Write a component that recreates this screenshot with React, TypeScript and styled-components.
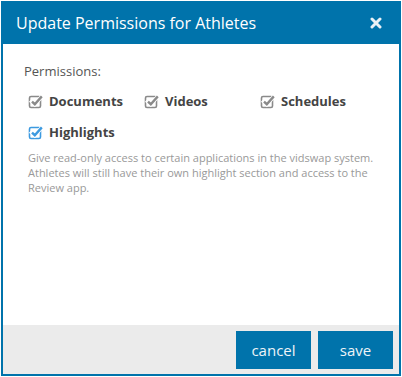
import React from 'react';
import styled, { createGlobalStyle } from 'styled-components';

const GlobalStyle = createGlobalStyle`
  html, body {
    margin: 0;
    padding: 0;
    background: #ffffff;
    font-family: "Open Sans", "Liberation Sans", sans-serif;
  }
`;

const blue = '#0073ab';

const Dialog = styled.div`
  box-sizing: border-box;
  margin: 1px 0 0 1px;
  width: 400px;
  height: 375px;
  border: 2px solid ${blue};
  border-top: none;
  display: flex;
  flex-direction: column;
  background: #fff;
`;

const Header = styled.div`
  background: ${blue};
  height: 43px;
  display: flex;
  align-items: center;
  justify-content: space-between;
  padding: 0 19px 0 15px;
  margin: 0 -2px;
`;

const Title = styled.h3`
  margin: 0;
  color: #fff;
  font-size: 16px;
  font-weight: 400;
`;

const Body = styled.div`
  flex: 1;
  padding: 18px 20px 0 21px;
`;

const Label = styled.div`
  color: #555;
  font-size: 13px;
  margin-bottom: 11px;
`;

const Grid = styled.div`
  display: grid;
  grid-template-columns: 116px 116px 116px;
  row-gap: 12px;
  padding-left: 4px;
`;

const Option = styled.label`
  display: flex;
  align-items: center;
  gap: 5px;
  color: #444;
  font-size: 13px;
  font-weight: 700;
  height: 19px;
`;

const Help = styled.p`
  margin: 9px 0 0 4px;
  color: #999;
  font-size: 11px;
  line-height: 15px;
`;

const Footer = styled.div`
  background: #ebebeb;
  height: 49px;
  display: flex;
  justify-content: flex-end;
  align-items: center;
  gap: 7px;
  padding-right: 6px;
`;

const Button = styled.button`
  width: 75px;
  height: 38px;
  border: none;
  background: ${blue};
  color: #eef4f8;
  font-family: "Open Sans", "Liberation Sans", sans-serif;
  font-size: 15px;
  padding: 0;
`;

const Check = ({ on }: { on?: boolean }) => {
  const c = on ? '#3c9ae0' : '#8a8a8a';
  return (
    <svg width="16" height="16" viewBox="0 0 16 16">
      <rect x="1.5" y="3.5" width="11" height="11" rx="1.5" fill="none" stroke={c} strokeWidth="1.6" />
      <path d="M3.8 8.6 L6.8 11.4 L14 3.2" fill="none" stroke="#fff" strokeWidth="4" strokeLinecap="square" />
      <path d="M4 8.6 L6.8 11.2 L13.8 3.4" fill="none" stroke={c} strokeWidth="2.4" />
    </svg>
  );
};

const Close = () => (
  <svg width="12" height="12" viewBox="0 0 12 12">
    <path d="M2 2 L10 10 M10 2 L2 10" stroke="#e9f1f6" strokeWidth="3" strokeLinecap="round" />
  </svg>
);

const perms = [
  { name: 'Documents', on: false },
  { name: 'Videos', on: false },
  { name: 'Schedules', on: false },
  { name: 'Highlights', on: true },
];

const App: React.FC = () => (
  <>
    <GlobalStyle />
    <Dialog>
      <Header>
        <Title>Update Permissions for Athletes</Title>
        <Close />
      </Header>
      <Body>
        <Label>Permissions:</Label>
        <Grid>
          {perms.map(p => (
            <Option key={p.name}>
              <Check on={p.on} />
              {p.name}
            </Option>
          ))}
        </Grid>
        <Help>
          Give read-only access to certain applications in the vidswap system. Athletes will still have their own
          highlight section and access to the Review app.
        </Help>
      </Body>
      <Footer>
        <Button>cancel</Button>
        <Button>save</Button>
      </Footer>
    </Dialog>
  </>
);

export default App;
